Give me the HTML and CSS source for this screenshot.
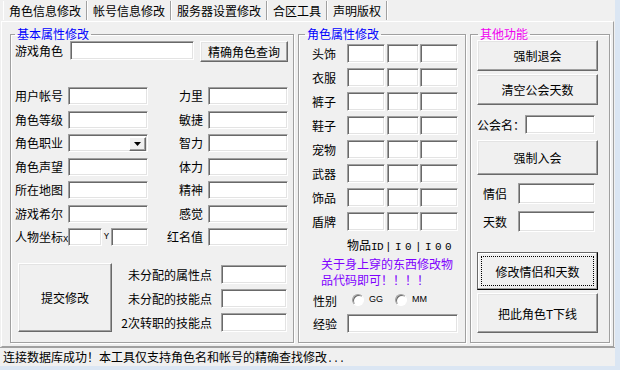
FILE: index.html
```html
<!DOCTYPE html>
<html lang="zh-CN">
<head>
    <meta charset="UTF-8">
    <meta name="viewport" content="width=device-width, initial-scale=1.0">
    <title>角色信息修改</title>
    <link rel="stylesheet" href="styles.css">
</head>
<body>
    <div class="window">
        <div class="tabs">
            <span class="tab active">角色信息修改</span>
            <span class="tab">帐号信息修改</span>
            <span class="tab">服务器设置修改</span>
            <span class="tab">合区工具</span>
            <span class="tab">声明版权</span>
        </div>

        <div class="page">
            <!-- 基本属性 -->
            <fieldset class="group g-base">
                <legend class="blue">基本属性修改</legend>
                <div class="search-row">
                    <label class="search-lbl">游戏角色</label>
                    <input class="edit name-edit" type="text">
                    <button class="btn query-btn">精确角色查询</button>
                </div>

                <div class="attr-grid">
                    <label>用户帐号</label><input class="edit" type="text">
                    <label class="r">力里</label><input class="edit" type="text">

                    <label>角色等级</label><input class="edit" type="text">
                    <label class="r">敏捷</label><input class="edit" type="text">

                    <label>角色职业</label>
                    <div class="combo">
                        <span class="combo-btn">
                            <svg width="7" height="4" viewBox="0 0 7 4"><path d="M0 0h7L3.5 4z" fill="#000"/></svg>
                        </span>
                    </div>
                    <label class="r">智力</label><input class="edit" type="text">

                    <label>角色声望</label><input class="edit" type="text">
                    <label class="r">体力</label><input class="edit" type="text">

                    <label>所在地图</label><input class="edit" type="text">
                    <label class="r">精神</label><input class="edit" type="text">

                    <label>游戏希尔</label><input class="edit" type="text">
                    <label class="r">感觉</label><input class="edit" type="text">

                    <label>人物坐标<span class="ascii xl">X</span></label>
                    <div class="coord">
                        <input class="edit cx" type="text">
                        <span class="ascii yl">Y</span>
                        <input class="edit cy" type="text">
                    </div>
                    <label class="r">红名值</label><input class="edit" type="text">
                </div>

                <div class="submit-area">
                    <button class="btn submit-btn">提交修改</button>
                    <div class="points">
                        <div class="point-row"><label>未分配的属性点</label><input class="edit" type="text"></div>
                        <div class="point-row"><label>未分配的技能点</label><input class="edit" type="text"></div>
                        <div class="point-row"><label>2次转职的技能点</label><input class="edit" type="text"></div>
                    </div>
                </div>
            </fieldset>

            <!-- 角色属性 -->
            <fieldset class="group g-equip">
                <legend class="blue">角色属性修改</legend>
                <div class="equip-list">
                    <div class="equip-row"><label>头饰</label><input class="edit c1"><input class="edit c2"><input class="edit c3"></div>
                    <div class="equip-row"><label>衣服</label><input class="edit c1"><input class="edit c2"><input class="edit c3"></div>
                    <div class="equip-row"><label>裤子</label><input class="edit c1"><input class="edit c2"><input class="edit c3"></div>
                    <div class="equip-row"><label>鞋子</label><input class="edit c1"><input class="edit c2"><input class="edit c3"></div>
                    <div class="equip-row"><label>宠物</label><input class="edit c1"><input class="edit c2"><input class="edit c3"></div>
                    <div class="equip-row"><label>武器</label><input class="edit c1"><input class="edit c2"><input class="edit c3"></div>
                    <div class="equip-row"><label>饰品</label><input class="edit c1"><input class="edit c2"><input class="edit c3"></div>
                    <div class="equip-row"><label>盾牌</label><input class="edit c1"><input class="edit c2"><input class="edit c3"></div>
                </div>
                <div class="id-row">物品<span class="ascii id">ID</span><span class="ascii idcode">|I0|I00</span></div>
                <div class="note">关于身上穿的东西修改物<br>品代码即可！！！！</div>
                <div class="sex-row">
                    <label>性别</label>
                    <span class="radio"></span><span class="opt">GG</span>
                    <span class="radio"></span><span class="opt">MM</span>
                </div>
                <div class="exp-row"><label>经验</label><input class="edit exp" type="text"></div>
            </fieldset>

            <!-- 其他功能 -->
            <fieldset class="group g-other">
                <legend class="pink">其他功能</legend>
                <button class="btn side-btn b-quit">强制退会</button>
                <button class="btn side-btn b-clear">清空公会天数</button>
                <div class="guild-row"><label>公会名：</label><input class="edit guild" type="text"></div>
                <button class="btn side-btn b-join">强制入会</button>
                <div class="lover-row"><label>情侣</label><input class="edit lover" type="text"></div>
                <div class="lover-row days"><label>天数</label><input class="edit lover" type="text"></div>
                <button class="btn side-btn b-save focused">修改情侣和天数</button>
                <button class="btn side-btn b-kick">把此角色T下线</button>
            </fieldset>
        </div>

        <div class="status">连接数据库成功！本工具仅支持角色名和帐号的精确查找修改<span class="dots">...</span></div>
    </div>
</body>
</html>
```

FILE: styles.css
```css
* {
    box-sizing: border-box;
}
html, body {
    margin: 0;
}
body {
    width: 620px;
    height: 370px;
    overflow: hidden;
    background-color: #dbe6f3;
    font-family: "Noto Sans CJK SC", sans-serif;
    font-size: 12px;
    color: #000;
}
.window {
    width: 615px;
    height: 366px;
    background-color: #f0f0f0;
    display: flex;
    flex-direction: column;
}

/* tabs */
.tabs {
    height: 21px;
    flex: 0 0 21px;
    display: flex;
    padding-left: 3px;
}
.tab {
    height: 19px;
    margin-top: 1px;
    margin-right: 1px;
    padding: 0 5px;
    line-height: 19px;
    white-space: nowrap;
    border-right: 1px solid #a0a0a0;
    box-shadow: 1px 0 0 #fff;
}
.tab.active {
    border-left: 1px solid #fff;
}

.page {
    flex: 0 0 326px;
    width: 613px;
    margin-left: 1px;
    border: 1px solid;
    border-color: #fff #a0a0a0 #a0a0a0 #fff;
    display: flex;
    gap: 4px;
    padding: 5px 0 0 8px;
}

/* group boxes */
.group {
    margin: 0;
    padding: 0;
    height: 316px;
    border: 1px solid #a0a0a0;
    box-shadow: 1px 1px 0 #fff, inset 1px 1px 0 #fff;
    min-width: 0;
}
.group legend {
    margin-left: 4px;
    padding: 0 2px;
    line-height: 14px;
}
.blue {
    color: #0000ff;
}
.pink {
    color: #f000f0;
}
.g-base {
    width: 284px;
}
.g-equip {
    width: 168px;
}
.g-equip legend {
    margin-left: 6px;
}
.g-other {
    width: 140px;
    display: flex;
    flex-direction: column;
    padding-left: 6px;
}
.g-other legend {
    margin-left: 1px;
}

/* controls */
.edit {
    display: block;
    height: 19px;
    margin: 0;
    padding: 0 2px;
    background: #fff;
    border: 1px solid;
    border-color: #a0a0a0 #fff #fff #a0a0a0;
    border-radius: 0;
    box-shadow: inset 1px 1px 0 #696969, inset -1px -1px 0 #e3e3e3;
    font: inherit;
    outline: none;
    appearance: none;
}
.btn {
    appearance: none;
    margin: 0;
    padding: 0;
    font: inherit;
    color: #000;
    background: #f0f0f0;
    border: 1px solid;
    border-color: #fff #696969 #696969 #fff;
    border-radius: 0;
    box-shadow: inset -1px -1px 0 #a0a0a0, inset 1px 1px 0 #e3e3e3;
    white-space: nowrap;
}
.ascii {
    font-family: "Liberation Mono", monospace;
    font-size: 11px;
}

/* 基本属性修改 */
.search-row {
    display: flex;
    align-items: flex-start;
    margin-left: 4px;
    height: 21px;
}
.search-lbl {
    width: 48px;
    line-height: 19px;
}
.name-edit {
    width: 124px;
    margin-left: 7px;
}
.query-btn {
    width: 88px;
    height: 21px;
    margin-left: 6px;
}
.attr-grid {
    display: grid;
    grid-template-columns: 48px 80px 50px 80px;
    grid-auto-rows: 18px;
    column-gap: 5px;
    row-gap: 5.5px;
    margin: 25px 0 0 4px;
}
.attr-grid label {
    line-height: 18px;
    white-space: nowrap;
}
.attr-grid .r {
    text-align: right;
}
.attr-grid .edit {
    height: 18px;
}
.combo {
    height: 18px;
    background: #fff;
    border: 1px solid;
    border-color: #a0a0a0 #fff #fff #a0a0a0;
    box-shadow: inset 1px 1px 0 #696969, inset -1px -1px 0 #e3e3e3;
    display: flex;
    justify-content: flex-end;
    padding: 2px 1px 1px 2px;
}
.combo-btn {
    width: 17px;
    height: 14px;
    background: #f0f0f0;
    border: 1px solid;
    border-color: #fff #696969 #696969 #fff;
    box-shadow: inset -1px -1px 0 #a0a0a0;
    display: flex;
    align-items: center;
    justify-content: center;
}
.xl {
    font-size: 9px;
    letter-spacing: -1px;
}
.coord {
    display: flex;
}
.coord .cx {
    width: 34px;
}
.coord .cy {
    width: 37px;
}
.yl {
    width: 9px;
    font-size: 9px;
    line-height: 18px;
    text-align: center;
}
.submit-area {
    display: flex;
    margin-top: 17px;
}
.submit-btn {
    width: 94px;
    height: 69px;
    margin-left: 7px;
}
.points {
    width: 175px;
    padding-top: 2px;
    display: flex;
    flex-direction: column;
    gap: 5px;
}
.point-row {
    display: flex;
    justify-content: flex-end;
    gap: 9px;
}
.point-row label {
    line-height: 19px;
    white-space: nowrap;
}
.point-row .edit {
    width: 66px;
}

/* 角色属性修改 */
.equip-list {
    display: flex;
    flex-direction: column;
    gap: 5px;
    margin-top: 3px;
}
.equip-row {
    display: flex;
    padding-left: 13px;
}
.equip-row label {
    width: 35px;
    line-height: 19px;
}
.c1 {
    width: 38px;
}
.c2 {
    width: 32px;
    margin-left: 2px;
}
.c3 {
    width: 38px;
    margin-left: 1px;
}
.id-row {
    margin-top: 7px;
    padding-left: 48px;
    line-height: 14px;
    white-space: nowrap;
}
.id {
    letter-spacing: -0.6px;
}
.idcode {
    margin-left: 2px;
    letter-spacing: 3.4px;
}
.note {
    margin-top: 2px;
    padding-left: 22px;
    line-height: 16px;
    color: #8000ff;
    white-space: nowrap;
}
.sex-row {
    display: flex;
    align-items: center;
    margin-top: 5px;
    padding-left: 14px;
    height: 14px;
}
.sex-row label {
    width: 39px;
}
.radio {
    width: 12px;
    height: 12px;
    border-radius: 50%;
    background: #fff;
    border: 1px solid;
    border-color: #a0a0a0 #fff #fff #a0a0a0;
    box-shadow: inset 1px 1px 0 #696969;
}
.opt {
    font-family: "Liberation Sans", sans-serif;
    font-size: 9px;
    margin-left: 5px;
    width: 26px;
    margin-top: -3px;
}
.exp-row {
    display: flex;
    margin-top: 7px;
    padding-left: 14px;
}
.exp-row label {
    width: 34px;
    line-height: 19px;
}
.exp {
    width: 111px;
}

/* 其他功能 */
.side-btn {
    width: 121px;
}
.b-quit {
    height: 31px;
    margin-top: -1px;
}
.b-clear {
    height: 31px;
    margin-top: 3px;
}
.guild-row {
    display: flex;
    margin-top: 10px;
}
.guild-row label {
    width: 48px;
    line-height: 19px;
    white-space: nowrap;
}
.guild {
    width: 70px;
}
.b-join {
    height: 35px;
    margin-top: 6px;
}
.lover-row {
    display: flex;
    margin-top: 8px;
    padding-left: 6px;
}
.lover-row.days {
    margin-top: 7px;
}
.lover-row label {
    width: 35px;
    line-height: 21px;
}
.lover {
    width: 77px;
    height: 21px;
}
.b-save {
    height: 38px;
    margin-top: 20px;
}
.b-kick {
    height: 40px;
    margin-top: 3px;
}
.focused {
    border-color: #696969 #000 #000 #696969;
    box-shadow: inset -1px -1px 0 #a0a0a0, inset 1px 1px 0 #fff;
    outline: 1px dotted #000;
    outline-offset: -5px;
}

/* status bar */
.status {
    flex: 0 0 19px;
    border-top: 1px solid #a0a0a0;
    padding-left: 3px;
    line-height: 18px;
    white-space: nowrap;
}
.dots {
    font-family: "Liberation Mono", monospace;
    font-size: 10px;
}
```
